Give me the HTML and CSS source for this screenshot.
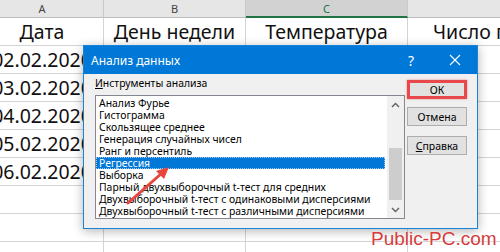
FILE: index.html
```html
<!DOCTYPE html>
<html lang="ru">
<head>
    <meta charset="UTF-8">
    <title>Анализ данных</title>
    <link rel="stylesheet" href="styles.css">
</head>
<body>

    <div class="sheet">
        <div class="row head">
            <div class="cell col-a">A</div>
            <div class="cell col-b">B</div>
            <div class="cell col-c active">C</div>
            <div class="cell col-d"></div>
        </div>
        <div class="row">
            <div class="cell col-a">Дата</div>
            <div class="cell col-b">День недели</div>
            <div class="cell col-c">Температура</div>
            <div class="cell col-d left">Число покупателей</div>
        </div>
        <div class="row">
            <div class="cell col-a">02.02.2020</div>
            <div class="cell col-b"></div><div class="cell col-c"></div><div class="cell col-d"></div>
        </div>
        <div class="row">
            <div class="cell col-a">03.02.2020</div>
            <div class="cell col-b"></div><div class="cell col-c"></div><div class="cell col-d"></div>
        </div>
        <div class="row">
            <div class="cell col-a">04.02.2020</div>
            <div class="cell col-b"></div><div class="cell col-c"></div><div class="cell col-d"></div>
        </div>
        <div class="row">
            <div class="cell col-a">05.02.2020</div>
            <div class="cell col-b"></div><div class="cell col-c"></div><div class="cell col-d"></div>
        </div>
        <div class="row">
            <div class="cell col-a">06.02.2020</div>
            <div class="cell col-b"></div><div class="cell col-c"></div><div class="cell col-d"></div>
        </div>
        <div class="row">
            <div class="cell col-a"></div><div class="cell col-b"></div><div class="cell col-c"></div><div class="cell col-d"></div>
        </div>
        <div class="row">
            <div class="cell col-a"></div><div class="cell col-b"></div><div class="cell col-c"></div><div class="cell col-d"></div>
        </div>
        <div class="row">
            <div class="cell col-a"></div><div class="cell col-b"></div><div class="cell col-c"></div><div class="cell col-d"></div>
        </div>
    </div>

    <div class="dialog">
        <div class="titlebar">
            <span class="title">Анализ данных</span>
            <span class="tb-btn">?</span>
            <span class="tb-btn">
                <svg width="12" height="12" viewBox="0 0 12 12"><path d="M1 1L11 11M11 1L1 11" stroke="#fff" stroke-width="1.1" fill="none"/></svg>
            </span>
        </div>
        <div class="content">
            <div class="tools">
                <div class="label"><u>И</u>нструменты анализа</div>
                <div class="listbox">
                    <div class="items">
                        <div class="item">Анализ Фурье</div>
                        <div class="item">Гистограмма</div>
                        <div class="item">Скользящее среднее</div>
                        <div class="item">Генерация случайных чисел</div>
                        <div class="item">Ранг и персентиль</div>
                        <div class="item selected">Регрессия</div>
                        <div class="item">Выборка</div>
                        <div class="item">Парный двухвыборочный t-тест для средних</div>
                        <div class="item">Двухвыборочный t-тест с одинаковыми дисперсиями</div>
                        <div class="item">Двухвыборочный t-тест с различными дисперсиями</div>
                    </div>
                    <div class="scrollbar">
                        <div class="arrow">
                            <svg width="9" height="6" viewBox="0 0 9 6"><path d="M1 5L4.5 1.5L8 5" stroke="#606060" stroke-width="1.4" fill="none"/></svg>
                        </div>
                        <div class="track"><div class="thumb"></div></div>
                        <div class="arrow">
                            <svg width="9" height="6" viewBox="0 0 9 6"><path d="M1 1L4.5 4.5L8 1" stroke="#606060" stroke-width="1.4" fill="none"/></svg>
                        </div>
                    </div>
                </div>
            </div>
            <div class="buttons">
                <button class="btn ok">ОК</button>
                <button class="btn cancel">Отмена</button>
                <button class="btn help"><u>С</u>правка</button>
            </div>
        </div>
    </div>

    <svg class="pointer" width="60" height="50" viewBox="0 0 60 50">
        <path d="M6 43L40 13" stroke="#e8453c" stroke-width="3" stroke-linecap="round" fill="none"/>
        <path d="M47 7L34 11L42 19Z" fill="#e8453c"/>
    </svg>

    <div class="watermark">Public-PC.com</div>

</body>
</html>
```

FILE: styles.css
```css
* {
    margin: 0;
    padding: 0;
    box-sizing: border-box;
}
body {
    width: 500px;
    height: 252px;
    overflow: hidden;
    background: #fff;
    position: relative;
    font-family: 'Noto Sans', sans-serif;
}
.sheet {
    margin-left: -19px;
}
.row {
    display: flex;
    height: 28px;
}
.cell {
    flex-shrink: 0;
    height: 100%;
    border-right: 1px solid #d4d4d4;
    border-bottom: 1px solid #d4d4d4;
    display: flex;
    align-items: center;
    justify-content: center;
    font-size: 19.5px;
    color: #111;
    white-space: nowrap;
    overflow: hidden;
}
.cell.left {
    justify-content: flex-start;
    padding-left: 25px;
}
.col-a { width: 123px; }
.col-b { width: 142px; }
.col-c { width: 162px; }
.col-d { width: 200px; }
.row.head {
    height: 18px;
}
.head .cell {
    background: #e6e6e6;
    border-right-color: #c9c9c9;
    border-bottom-color: #bdbdbd;
    font-size: 11px;
    color: #444;
}
.head .cell.active {
    background: #d2d2d2;
    color: #217346;
    border-bottom: 2px solid #217346;
}
.dialog {
    position: absolute;
    left: 83px;
    top: 45px;
    width: 395px;
    height: 184px;
    background: #f0f0f0;
    border: 1px solid #1883d7;
    box-shadow: 0 2px 10px rgba(0, 0, 0, 0.3);
    font-size: 10.4px;
    color: #000;
}
.titlebar {
    height: 28px;
    background: #0078d7;
    color: #fff;
    display: flex;
    align-items: center;
    padding-left: 7px;
    font-size: 12px;
}
.title {
    flex: 1;
}
.tb-btn {
    width: 44px;
    height: 28px;
    display: flex;
    align-items: center;
    justify-content: center;
    font-size: 14px;
}
.content {
    display: flex;
    padding: 2px 0 0 11px;
}
.tools {
    width: 310px;
}
.label {
    height: 14px;
    line-height: 14px;
}
.listbox {
    margin-top: 5px;
    height: 124px;
    background: #fff;
    border: 1px solid #828790;
    display: flex;
}
.items {
    flex: 1;
    padding: 1px 2px 1px 0;
}
.item {
    height: 12px;
    line-height: 12px;
    padding-left: 3px;
    white-space: nowrap;
}
.item.selected {
    background: #0078d7;
    color: #fff;
    outline: 1px dotted #a0c8f0;
    outline-offset: -1px;
}
.scrollbar {
    width: 17px;
    background: #f0f0f0;
    display: flex;
    flex-direction: column;
}
.arrow {
    height: 17px;
    display: flex;
    align-items: center;
    justify-content: center;
}
.track {
    flex: 1;
    padding: 35px 2px 0;
}
.thumb {
    height: 52px;
    background: #cdcdcd;
}
.buttons {
    margin-left: 2px;
    display: flex;
    flex-direction: column;
    padding-top: 4px;
}
.btn {
    width: 60px;
    height: 19px;
    background: #e1e1e1;
    border: 1px solid #adadad;
    font-family: 'Noto Sans', sans-serif;
    font-size: 10.5px;
    color: #000;
}
.btn.ok {
    border: 3px solid #e8474c;
    box-shadow: 0 0 2px rgba(200, 40, 40, 0.5);
}
.btn.cancel {
    margin-top: 8px;
}
.btn.help {
    margin-top: 10px;
}
.pointer {
    position: absolute;
    left: 122px;
    top: 160px;
}
.watermark {
    position: absolute;
    left: 371px;
    top: 228px;
    font-family: 'Liberation Sans', sans-serif;
    font-size: 19px;
    color: #d63c3c;
    text-shadow: 0 0 2px #fff;
}
```
